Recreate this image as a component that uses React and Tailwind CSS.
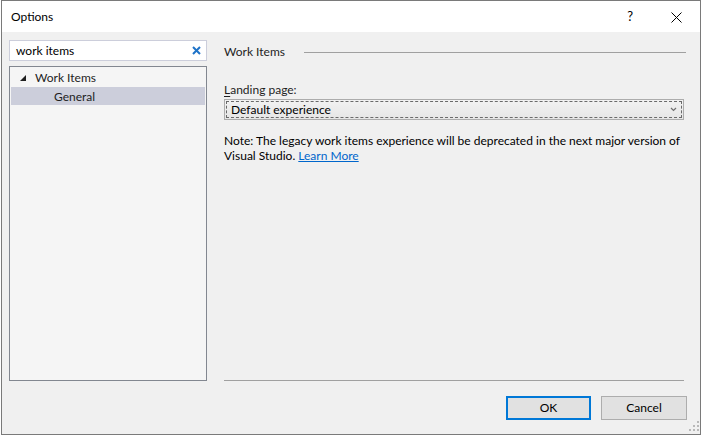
import React from "react";

const font = { fontFamily: 'Lato, "Noto Sans", sans-serif' };

function Triangle() {
  return (
    <svg width="6" height="6" viewBox="0 0 6 6" className="shrink-0">
      <polygon points="6,0 6,6 0,6" fill="#1e1e1e" />
    </svg>
  );
}

function Grip() {
  const dots = [
    [8, 0],
    [4, 4],
    [8, 4],
    [0, 8],
    [4, 8],
    [8, 8],
  ];
  return (
    <svg width="10" height="10" viewBox="0 0 10 10">
      {dots.map(([x, y]) => (
        <rect key={x + "-" + y} x={x} y={y} width="2" height="2" fill="#b8b8b8" />
      ))}
    </svg>
  );
}

export default function App() {
  return (
    <div className="w-[702px] h-[436px] bg-white text-[12px] text-[#1e1e1e]" style={font}>
      <div className="ml-[1px] w-[700px] h-[435px] border border-[#7a7a7a] flex flex-col">
        {/* title bar */}
        <div className="h-[31px] pt-px bg-white flex items-center shrink-0">
          <span className="ml-[9px] text-black">Options</span>
          <div className="flex-1" />
          <span className="text-[13px] text-black mr-[38px]">?</span>
          <svg width="11" height="11" viewBox="0 0 11 11" className="mr-[18px]">
            <path d="M0.5 0.5 L10.5 10.5 M10.5 0.5 L0.5 10.5" stroke="#000" strokeWidth="1" />
          </svg>
        </div>

        {/* body */}
        <div className="flex-1 bg-[#f0f0f0] flex">
          <div className="shrink-0 pl-[7px] pt-[8px] pb-[53px] w-[205px] flex flex-col">
            <div className="h-[21px] bg-white border border-[#cccedb] flex items-center pl-[6px] pr-[5px]">
              <span className="flex-1 text-black pt-px">work items</span>
              <svg width="9" height="9" viewBox="0 0 9 9">
                <path d="M1 1 L8 8 M8 1 L1 8" stroke="#1e73c8" strokeWidth="2" />
              </svg>
            </div>
            <div className="mt-[5px] flex-1 bg-[#f5f5f5] border border-[#828790] p-[1px]">
              <div className="h-[19px] flex items-center pl-[9px] gap-[9px]">
                <Triangle />
                <span className="pt-px">Work Items</span>
              </div>
              <div className="h-[18px] flex items-center bg-[#cccedb] pl-[43px]">
                <span className="pt-px">General</span>
              </div>
            </div>
          </div>

          <div className="min-w-0 flex-1 ml-[17px] mr-[13px] pt-[12px] pb-[14px] flex flex-col">
            <div className="h-[16px] flex items-center">
              <span>Work Items</span>
              <div className="flex-1 ml-[19px] mr-[1px] h-px bg-[#a0a0a0]" />
            </div>
            <div className="mt-[21px] h-[16px] flex items-center">
              <span className="pt-px">
                <span className="underline underline-offset-2">L</span>anding page:
              </span>
            </div>
            <div className="mt-[2px] mr-[3px] h-[21px] border border-[#acacac] bg-gradient-to-b from-[#f2f2f2] to-[#e6e6e6] p-[1px]">
              <div className="h-full border border-dashed border-[#6a6a6a] flex items-center pl-[4px] pr-[4px]">
                <span className="flex-1 text-black pt-px">Default experience</span>
                <svg width="7" height="5" viewBox="0 0 7 5">
                  <path d="M1 1 L3.5 3.5 L6 1" stroke="#707070" strokeWidth="1.2" fill="none" />
                </svg>
              </div>
            </div>
            <p className="mt-[13px] leading-[15px] text-black whitespace-nowrap">
              Note: The legacy work items experience will be deprecated in the next major version of
              <br />
              Visual Studio. <span className="text-[#0066cc] underline">Learn More</span>
            </p>
            <div className="flex-1" />
            <div className="mr-[3px] h-px bg-[#a0a0a0]" />
            <div className="mt-[15px] flex justify-end gap-[10px]">
              <div className="w-[85px] h-[24px] border-2 border-[#0078d7] bg-[#e1e1e1] flex items-center justify-center text-black">
                OK
              </div>
              <div className="w-[86px] h-[24px] border border-[#adadad] bg-[#e1e1e1] flex items-center justify-center text-black">
                Cancel
              </div>
            </div>
          </div>
        </div>
      </div>
      <div className="relative">
        <div className="absolute right-[3px] bottom-[4px]">
          <Grip />
        </div>
      </div>
    </div>
  );
}
